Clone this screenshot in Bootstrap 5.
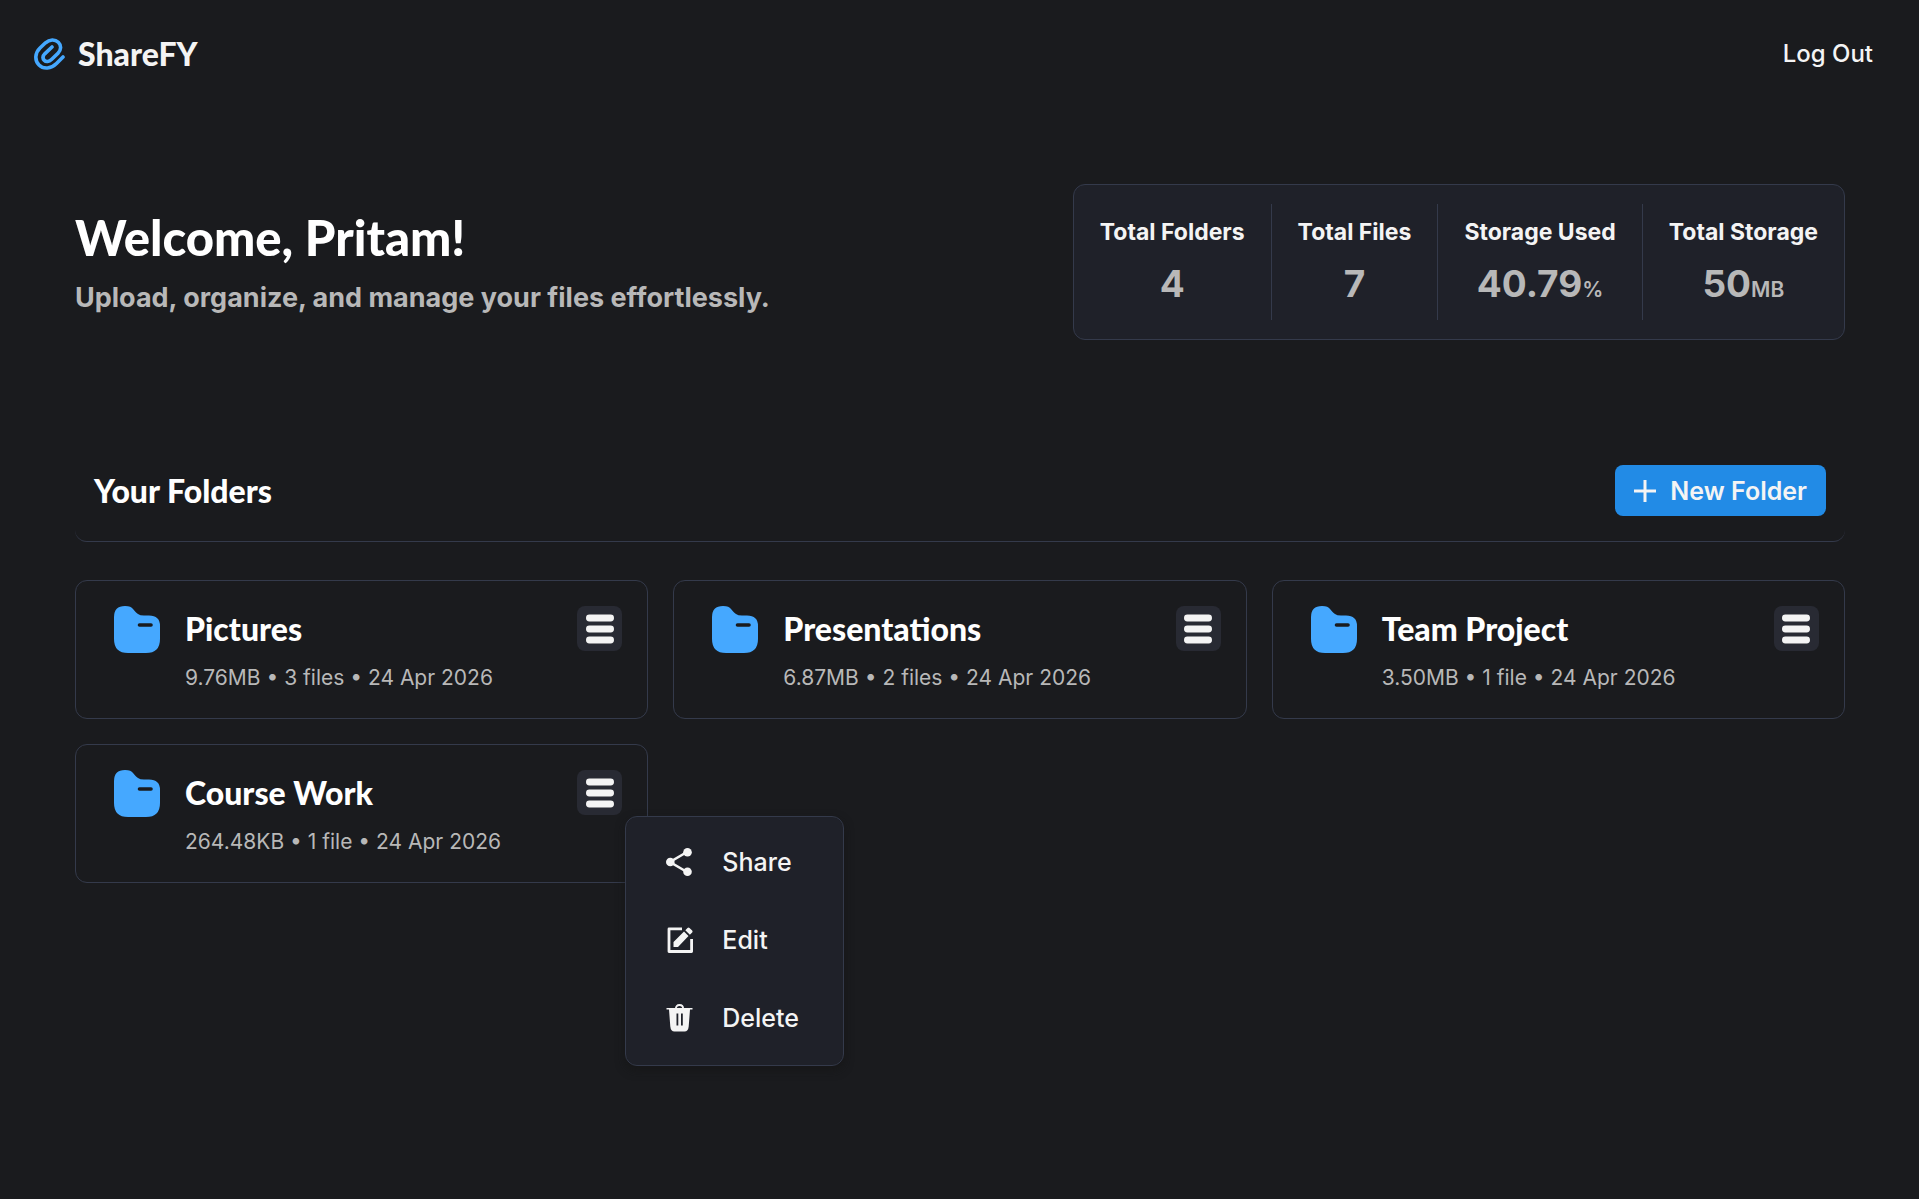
<!DOCTYPE html>
<html lang="en" data-bs-theme="dark">
<head>
<meta charset="utf-8">
<meta name="viewport" content="width=device-width, initial-scale=1">
<title>ShareFY</title>
<link href="https://cdn.jsdelivr.net/npm/bootstrap@5.3.0/dist/css/bootstrap.min.css" rel="stylesheet">
<style>
  body { background: #1a1b1e; color: #f4f4f4; font-family: Inter, "Liberation Sans", sans-serif; font-size: 25px; }
  .display-face { font-family: Lato, "Liberation Sans", sans-serif; font-weight: 900; }
  .site-bar { padding: 30px 46px 30px 33px; }
  .brand { color: #f4f4f4; font-size: 32px; line-height: 48px; gap: 13px; }
  .logout { color: #f4f4f4; font-size: 24px; font-weight: 500; line-height: 48px; }
  .page { padding: 76px 74px 48px 75px; }
  .welcome { font-size: 49px; line-height: 60px; }
  .tagline { color: #b8b8b8; font-size: 27px; font-weight: 700; line-height: 40px; margin-top: 11px; }
  .stats { background: #1f2129; border: 1px solid #343a4b; border-radius: 12px; padding: 19px 0; }
  .stat { padding: 12px 26px; }
  .stat + .stat { border-left: 1px solid #343a4b; }
  .stat dt { font-size: 23px; font-weight: 700; line-height: 32px; }
  .stat dd { color: #b8b8b8; font-size: 37px; font-weight: 700; line-height: 48px; margin-top: 12px; }
  .unit { font-size: 21px; font-weight: 600; line-height: 1; }
  .section-head { margin-top: 106px; padding: 19px; padding-bottom: 25px; border-bottom: 1px solid #343a4b; border-radius: 12px; }
  .section-title { font-size: 32px; line-height: 48px; }
  .btn-create { --bs-btn-bg: #228be6; --bs-btn-color: #f4f4f4; --bs-btn-hover-bg: #1c7ed6; --bs-btn-hover-color: #fff; border: 0; border-radius: 8px; font-size: 25px; font-weight: 600; line-height: 36px; padding: 8px 19px 7px; gap: 14px; }
  .folders { --bs-gutter-x: 25px; --bs-gutter-y: 25px; margin-top: 13px; }
  .folder { border: 1px solid #343a4b; border-radius: 12px; padding: 25px 25px 24px 38px; gap: 25px; }
  .folder-name { font-size: 32px; line-height: 46px; }
  .folder-meta { color: #b8b8b8; font-size: 21px; line-height: 33px; margin-top: 9px; }
  .btn-more { background: #282a33; border: 0; border-radius: 8px; width: 45px; height: 45px; padding: 0; color: #f4f4f4; }
  .actions { --bs-dropdown-bg: #1f2129; --bs-dropdown-link-color: #f4f4f4; --bs-dropdown-border-color: #343a4b; --bs-dropdown-border-radius: 12px; --bs-dropdown-link-hover-bg: #282a33; --bs-dropdown-min-width: 219px; --bs-dropdown-font-size: 25px; top: 46px; left: 48px; padding: 6px 0 8px; box-shadow: 0 4px 10px rgba(20, 20, 20, .6); }
  .actions .dropdown-item { font-weight: 500; line-height: 36px; padding: 21px 40px; gap: 28px; }
</style>
<script src="https://cdn.jsdelivr.net/npm/bootstrap@5.3.0/dist/js/bootstrap.bundle.min.js"></script>
</head>
<body class="min-vh-100">
<svg class="d-none" aria-hidden="true">
  <symbol id="folder" viewBox="0 0 46 47">
    <path fill="#45a8ff" d="M0 11Q0 0 11 0C20 0 19 5 24 8Q26 9.500 30 9.500H35Q46 9.500 46 20V33Q46 47 32 47H14Q0 47 0 33Z"/>
    <path stroke="#1a1b1e" stroke-width="3.600" stroke-linecap="round" d="M25.500 19H37"/>
  </symbol>
  <symbol id="bars" viewBox="0 0 28 30">
    <path stroke="currentColor" stroke-width="6.800" stroke-linecap="round" d="M3.400 4H24.600M3.400 15H24.600M3.400 26H24.600"/>
  </symbol>
</svg>

<nav class="site-bar d-flex justify-content-between align-items-center">
  <a class="brand display-face d-flex align-items-center text-decoration-none" href="#">
    <svg width="32" height="32" viewBox="0 0 32 32" fill="none" stroke="#45a8ff" stroke-width="3.600" stroke-linecap="round" stroke-linejoin="round" aria-hidden="true">
      <path d="M30 19L23.500 25.500C18 31 10.500 31.500 6 27C1.500 22.500 1.800 15 7 10L12.500 4.800C16.500 1.200 22 1 25.300 4.300C28.600 7.600 28.200 12 25 15.200L18.500 21.500C16 24 12.800 24 11.200 22.200C9.600 20.400 9.800 17.800 12 15.600L19 9"/>
    </svg>
    ShareFY
  </a>
  <a class="logout text-decoration-none" href="#">Log Out</a>
</nav>

<main class="page">
  <header class="d-flex flex-wrap justify-content-between align-items-center gap-4">
    <div>
      <h1 class="welcome display-face mb-0">Welcome, Pritam!</h1>
      <p class="tagline mb-0">Upload, organize, and manage your files effortlessly.</p>
    </div>
    <dl class="stats d-flex mb-0 text-center">
      <div class="stat"><dt>Total Folders</dt><dd class="mb-0">4</dd></div>
      <div class="stat"><dt>Total Files</dt><dd class="mb-0">7</dd></div>
      <div class="stat"><dt>Storage Used</dt><dd class="mb-0">40.79<span class="unit">%</span></dd></div>
      <div class="stat"><dt>Total Storage</dt><dd class="mb-0">50<span class="unit">MB</span></dd></div>
    </dl>
  </header>

  <section>
    <div class="section-head d-flex justify-content-between align-items-center">
      <h2 class="section-title display-face mb-0">Your Folders</h2>
      <button type="button" class="btn btn-create d-flex align-items-center">
        <svg width="22" height="22" viewBox="0 0 22 22" stroke="currentColor" stroke-width="3" aria-hidden="true"><path d="M0 11H22M11 0V22"/></svg>
        New Folder
      </button>
    </div>

    <div class="folders row row-cols-1 row-cols-md-2 row-cols-xl-3">
      <div class="col">
        <article class="folder d-flex align-items-start">
          <svg class="flex-shrink-0" width="46" height="47" aria-hidden="true"><use href="#folder"/></svg>
          <div class="flex-grow-1">
            <h3 class="folder-name display-face mb-0">Pictures</h3>
            <p class="folder-meta mb-0">9.76MB • 3 files • 24 Apr 2026</p>
          </div>
          <button type="button" class="btn-more d-flex align-items-center justify-content-center" aria-label="Pictures actions"><svg width="28" height="30" aria-hidden="true"><use href="#bars"/></svg></button>
        </article>
      </div>
      <div class="col">
        <article class="folder d-flex align-items-start">
          <svg class="flex-shrink-0" width="46" height="47" aria-hidden="true"><use href="#folder"/></svg>
          <div class="flex-grow-1">
            <h3 class="folder-name display-face mb-0">Presentations</h3>
            <p class="folder-meta mb-0">6.87MB • 2 files • 24 Apr 2026</p>
          </div>
          <button type="button" class="btn-more d-flex align-items-center justify-content-center" aria-label="Presentations actions"><svg width="28" height="30" aria-hidden="true"><use href="#bars"/></svg></button>
        </article>
      </div>
      <div class="col">
        <article class="folder d-flex align-items-start">
          <svg class="flex-shrink-0" width="46" height="47" aria-hidden="true"><use href="#folder"/></svg>
          <div class="flex-grow-1">
            <h3 class="folder-name display-face mb-0">Team Project</h3>
            <p class="folder-meta mb-0">3.50MB • 1 file • 24 Apr 2026</p>
          </div>
          <button type="button" class="btn-more d-flex align-items-center justify-content-center" aria-label="Team Project actions"><svg width="28" height="30" aria-hidden="true"><use href="#bars"/></svg></button>
        </article>
      </div>
      <div class="col">
        <article class="folder d-flex align-items-start">
          <svg class="flex-shrink-0" width="46" height="47" aria-hidden="true"><use href="#folder"/></svg>
          <div class="flex-grow-1">
            <h3 class="folder-name display-face mb-0">Course Work</h3>
            <p class="folder-meta mb-0">264.48KB • 1 file • 24 Apr 2026</p>
          </div>
          <div class="dropdown">
            <button type="button" class="btn-more d-flex align-items-center justify-content-center" data-bs-toggle="dropdown" aria-expanded="true" aria-label="Course Work actions"><svg width="28" height="30" aria-hidden="true"><use href="#bars"/></svg></button>
            <ul class="actions dropdown-menu show">
              <li><button type="button" class="dropdown-item d-flex align-items-center">
                <svg width="28" height="28" viewBox="0 0 28 28" fill="currentColor" aria-hidden="true"><path stroke="currentColor" stroke-width="2.600" fill="none" d="M21 4L4 14L21 24"/><circle cx="21.500" cy="4.300" r="4.300"/><circle cx="4.300" cy="14" r="4.300"/><circle cx="21.500" cy="23.700" r="4.300"/></svg>
                Share</button></li>
              <li><button type="button" class="dropdown-item d-flex align-items-center">
                <svg width="28" height="28" viewBox="0 0 28 28" fill="currentColor" aria-hidden="true"><path fill="none" stroke="currentColor" stroke-width="2.800" stroke-linejoin="round" d="M16 2.900H3V25.500H25.600V13"/><path d="M7.500 21V16L18 5.500L22.500 10L12 21ZM19.300 4.200L21.500 1.900Q22.500 1 23.500 1.900L26.200 4.600Q27 5.500 26.200 6.400L23.900 8.700Z"/></svg>
                Edit</button></li>
              <li><button type="button" class="dropdown-item d-flex align-items-center">
                <svg width="28" height="28" viewBox="0 0 28 28" fill="currentColor" aria-hidden="true"><path fill="none" stroke="currentColor" stroke-width="1.800" d="M9.800 5Q9.800 1 13.500 1T17.200 5"/><path fill-rule="evenodd" d="M.5 4H26.500V5.600H24L22.700 22.500Q22.200 27.500 18.500 27.500H8.500Q4.800 27.500 4.300 22.500L3 5.600H.5ZM10.500 9.500V21.500H12.300V9.500ZM15 9.500V21.500H16.800V9.500Z"/></svg>
                Delete</button></li>
            </ul>
          </div>
        </article>
      </div>
    </div>
  </section>
</main>
</body>
</html>
